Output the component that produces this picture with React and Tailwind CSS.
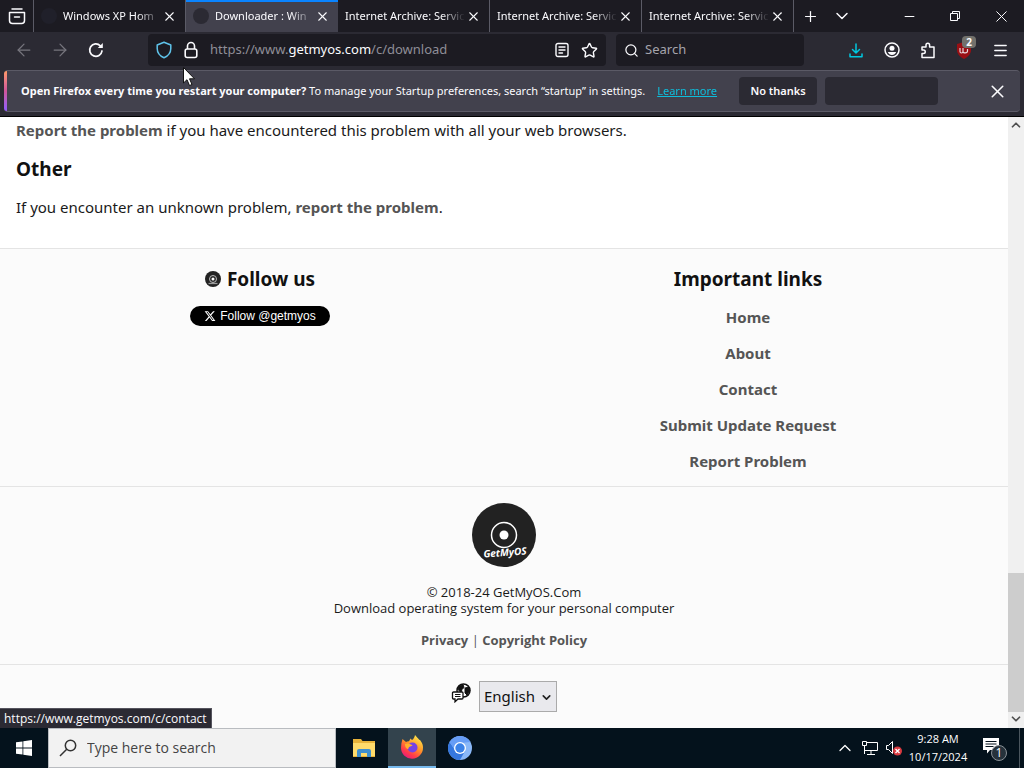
import { useState } from 'react';
import { X, Plus, ChevronDown, ChevronUp, Minus, Search, ArrowLeft, ArrowRight, Star, Menu } from 'lucide-react';

const tabs = [
  { id: 1, title: 'Windows XP Hom', icon: true },
  { id: 2, title: 'Downloader : Win', icon: true },
  { id: 3, title: 'Internet Archive: Servic' },
  { id: 4, title: 'Internet Archive: Servic' },
  { id: 5, title: 'Internet Archive: Servic' },
];

const links = ['Home', 'About', 'Contact', 'Submit Update Request', 'Report Problem'];

const Tab = ({ tab, active, onSelect }) => (
  <div
    className={
      active
        ? 'flex h-8 w-[152px] items-center border-t-2 border-[#0a84ff] bg-[#42414d] pr-2 pb-0.5 pl-[7px]'
        : 'flex h-8 w-[152px] items-center border-r border-[#5b5b66] pr-2 pl-[7px]'
    }
  >
    {tab.icon && <span className={active ? 'mr-1.5 size-4 shrink-0 rounded-full bg-[#2b2a33]' : 'mr-1.5 size-4 shrink-0 rounded-full bg-[#20202a]'} />}
    <button
      type="button"
      onClick={onSelect}
      className="min-w-0 flex-1 text-left text-[11px] whitespace-nowrap [mask-image:linear-gradient(to_left,transparent,black_24px)]"
    >
      {tab.title}
    </button>
    <button type="button" aria-label="Close tab" className="flex size-4 shrink-0 items-center justify-center">
      <X size={15} strokeWidth={1.75} />
    </button>
  </div>
);

const TabBar = () => {
  const [active, setActive] = useState(2);

  return (
    <div className="flex h-8 bg-[#1c1b22]">
      <button type="button" aria-label="Firefox View" className="flex w-[34px] items-center justify-center border-r border-[#5b5b66]">
        <svg width="18" height="18" viewBox="0 0 18 18" fill="none" stroke="currentColor" strokeWidth="1.5" strokeLinecap="round">
          <path d="M4 2h10" />
          <path d="M1.5 5.5h15v8a3 3 0 0 1-3 3h-9a3 3 0 0 1-3-3z" strokeLinejoin="round" />
          <path d="M6.5 10h5" />
        </svg>
      </button>
      {tabs.map((tab) => (
        <Tab key={tab.id} tab={tab} active={tab.id === active} onSelect={() => setActive(tab.id)} />
      ))}
      <button type="button" aria-label="New tab" className="flex w-8 items-center justify-center">
        <Plus size={17} strokeWidth={1.75} />
      </button>
      <button type="button" aria-label="List all tabs" className="flex w-8 items-center justify-center">
        <ChevronDown size={20} strokeWidth={1.75} />
      </button>
      <div className="ml-auto flex">
        <button type="button" aria-label="Minimize" className="flex w-[46px] items-center justify-center">
          <Minus size={15} strokeWidth={1.75} />
        </button>
        <button type="button" aria-label="Restore" className="flex w-[46px] items-center justify-center">
          <svg width="12" height="12" viewBox="0 0 12 12" fill="none" stroke="currentColor">
            <path d="M1.5 3.5h7v7h-7zM3.5 3.5v-2h7v7h-2" />
          </svg>
        </button>
        <button type="button" aria-label="Close" className="flex w-[46px] items-center justify-center">
          <X size={19} strokeWidth={1.25} />
        </button>
      </div>
    </div>
  );
};

const Toolbar = () => (
  <div className="flex h-[38px] items-center bg-[#2b2a33] pr-3 pb-0.5 pl-2">
    <button type="button" aria-label="Back" className="flex size-8 items-center justify-center text-[#77767e]">
      <ArrowLeft size={20} strokeWidth={1.5} />
    </button>
    <button type="button" aria-label="Forward" className="ml-1 flex size-8 items-center justify-center text-[#77767e]">
      <ArrowRight size={20} strokeWidth={1.5} />
    </button>
    <button type="button" aria-label="Reload" className="ml-1 flex size-8 items-center justify-center">
      <svg width="16" height="16" viewBox="0 0 16 16" fill="none" stroke="currentColor" strokeWidth="1.75" strokeLinecap="round">
        <path d="M14 9a6.2 6.2 0 1 1-1.7-5.2" />
        <path d="M14.8 1v5h-5z" fill="currentColor" stroke="none" />
      </svg>
    </button>

    {/* Address bar */}
    <div className="ml-9 flex h-8 flex-1 items-center rounded bg-[#1c1b22] px-2">
      <button type="button" aria-label="Tracking protection" className="text-[#5fc3ea]">
        <svg width="16" height="18" viewBox="0 0 16 18" fill="none" stroke="currentColor" strokeWidth="1.5" strokeLinejoin="round">
          <path d="M8 1.2 14.8 4v3.5c0 4-2.8 7.5-6.8 9.2C4 15 1.2 11.5 1.2 7.500V4z" />
        </svg>
      </button>
      <button type="button" aria-label="Site information" className="ml-3">
        <svg width="14" height="18" viewBox="0 0 14 18" fill="none" stroke="currentColor" strokeWidth="1.6">
          <rect x="1.2" y="8" width="11.6" height="8.5" rx="2" />
          <path d="M3.5 8V5a3.5 3.5 0 0 1 7 0v3" />
        </svg>
      </button>
      <div className="ml-3 flex-1 text-[13px] whitespace-nowrap text-[#8f8e97]">
        https://www.<span className="text-[#fbfbfe]">getmyos.com</span>/c/download
      </div>
      <button type="button" aria-label="Reader view" className="mr-3">
        <svg width="14" height="16" viewBox="0 0 14 16" fill="none" stroke="currentColor" strokeWidth="1.4" strokeLinecap="round">
          <rect x="1" y="1.5" width="12" height="13" rx="2" />
          <path d="M4 5h6M4 8h6M4 11h3.5" />
        </svg>
      </button>
      <button type="button" aria-label="Bookmark this page">
        <Star size={17} strokeWidth={2} />
      </button>
    </div>

    <label className="ml-2.5 flex h-8 w-[188px] items-center rounded bg-[#1c1b22] pl-2">
      <Search size={17} strokeWidth={2} />
      <input type="search" aria-label="Search" placeholder="Search" className="ml-1.5 w-full min-w-0 bg-transparent text-[13px] outline-none placeholder:text-[#a5a4ac]" />
    </label>

    <div className="ml-10 flex items-center">
      <button type="button" aria-label="Downloads" className="flex size-6 items-center justify-center text-[#00c8e0]">
        <svg width="14" height="15" viewBox="0 0 14 15" fill="none" stroke="currentColor" strokeWidth="1.5" strokeLinecap="round" strokeLinejoin="round">
          <path d="M7 1v9M3.5 6.5 7 10l3.5-3.5M1 11v2.800h12V11" />
        </svg>
      </button>
      <button type="button" aria-label="Account" className="ml-3 flex size-6 items-center justify-center">
        <svg width="16" height="16" viewBox="0 0 16 16" fill="none" stroke="currentColor" strokeWidth="1.5">
          <circle cx="8" cy="8" r="7" />
          <circle cx="8" cy="6.2" r="2.5" fill="currentColor" stroke="none" />
          <path d="M3.8 10h8.400c-.8 2-2.300 3-4.200 3s-3.400-1-4.200-3z" fill="currentColor" stroke="none" />
        </svg>
      </button>
      <button type="button" aria-label="Extensions" className="ml-3 flex size-6 items-center justify-center">
        <svg width="16" height="17" viewBox="0 0 16 17" fill="none" stroke="currentColor" strokeWidth="1.5" strokeLinejoin="round">
          <path d="M2 15.500v-4h1.500a1.700 1.700 0 0 0 0-3.500H2V5h4V3a1.800 1.800 0 0 1 3.600 0v2H14v10.500z" />
        </svg>
      </button>
      <button type="button" aria-label="uBlock Origin" className="relative ml-3 flex size-6 items-center justify-center">
        <svg width="16" height="17" viewBox="0 0 16 17" fill="none">
          <path d="M8 0 15 2v6c0 4-3 7-7 9-4-2-7-5-7-9V2z" fill="#990f14" />
          <path d="M4 6v3.500c0 2 3 2 3 0V6M7 9.500c0 2 4.500 2 4.500-.5V7" stroke="#e6d5d9" strokeWidth="1.2" />
        </svg>
        <span className="absolute -top-0.5 left-2.5 h-3 w-3.5 rounded-sm bg-[#72716c] text-center text-[10px] leading-3 font-bold">2</span>
      </button>
      <button type="button" aria-label="Menu" className="ml-3 flex size-6 items-center justify-center">
        <Menu size={17} strokeWidth={2} />
      </button>
    </div>
  </div>
);

const Notification = () => (
  <div className="bg-[#2b2a33] px-1 pb-1">
    <div className="flex h-[42px] items-center rounded border-t border-b border-[#5b5a66] bg-[#42414d] pr-3">
      <span className="h-full w-[3px] shrink-0 rounded-l bg-linear-to-b from-[#ff9a66] via-[#d0549a] to-[#9059ff]" />
      <p className="ml-3.5 text-[11px] whitespace-nowrap">
        <b>Open Firefox every time you restart your computer?</b> To manage your Startup preferences, search “startup” in settings.
        <a href="#startup" className="ml-3 text-[#00ddff] underline opacity-80">Learn more</a>
      </p>
      <button type="button" className="ml-[22px] h-7 w-[78px] shrink-0 rounded bg-[#2b2a33] text-[11px] font-semibold">No thanks</button>
      <button type="button" aria-label="Open on startup" className="ml-2 h-7 w-[113px] shrink-0 rounded bg-[#2b2a33]" />
      <button type="button" aria-label="Dismiss" className="ml-auto">
        <X size={21} strokeWidth={1.75} />
      </button>
    </div>
  </div>
);

const Page = () => {
  const [language, setLanguage] = useState('English');

  return (
    <main className="flex min-w-0 flex-1 flex-col overflow-hidden bg-[#fbfbfb] font-['Noto_Sans',sans-serif] text-[15px] text-[#1a1a1a]">
      <section className="border-b border-[#e4e4e4] bg-white px-4 pb-7">
        <p className="leading-[26px]">
          <a href="#report" className="font-bold text-[#555]">Report the problem</a> if you have encountered this problem with all your web browsers.
        </p>
        <h2 className="mt-3 text-[19px] leading-7 font-bold text-[#111]">Other</h2>
        <p className="mt-[11px] leading-[26px]">
          If you encounter an unknown problem, <a href="#report" className="font-bold text-[#555]">report the problem</a>.
        </p>
      </section>

      <section className="grid grid-cols-2 border-b border-[#e4e4e4] px-4 pt-4 pb-[5px] text-center">
        <div>
          <h2 className="flex items-center justify-center gap-1.5 text-[19px] leading-7 font-bold text-[#111]">
            <svg width="16" height="16" viewBox="0 0 64 64">
              <circle cx="32" cy="32" r="32" fill="#222" />
              <circle cx="32" cy="32" r="14" fill="none" stroke="#bbb" strokeWidth="4" />
              <circle cx="32" cy="32" r="6" fill="#fff" />
              <path d="M14 50h36" stroke="#999" strokeWidth="5" />
            </svg>
            Follow us
          </h2>
          <a href="#follow" className="mt-[13px] inline-flex h-5 items-center gap-1 rounded-full bg-black px-3.5 font-['Liberation_Sans',sans-serif] text-xs text-white">
            <svg width="12" height="12" viewBox="0 0 24 24" fill="currentColor">
              <path d="M18.244 2.250h3.308l-7.227 8.260 8.502 11.240H16.170l-5.214-6.817L4.990 21.750H1.680l7.730-8.835L1.254 2.250H8.080l4.713 6.231zm-1.161 17.520h1.833L7.084 4.126H5.117z" />
            </svg>
            Follow @getmyos
          </a>
        </div>
        <div>
          <h2 className="text-[19px] leading-7 font-bold text-[#111]">Important links</h2>
          <ul className="mt-2">
            {links.map((link) => (
              <li key={link} className="h-9 leading-8 font-bold text-[#555]">
                <a href="#link">{link}</a>
              </li>
            ))}
          </ul>
        </div>
      </section>

      <section className="flex flex-col items-center border-b border-[#e4e4e4] py-4 font-['Open_Sans',sans-serif] text-[13px] leading-4">
        <svg width="64" height="64" viewBox="0 0 64 64">
          <circle cx="32" cy="32" r="32" fill="#222" />
          <circle cx="32" cy="32" r="12.5" fill="none" stroke="#fff" strokeWidth="1.5" />
          <circle cx="32" cy="32" r="4.5" fill="#fff" />
          <text x="33" y="53" fill="#fff" fontSize="10" fontWeight="700" fontStyle="italic" textAnchor="middle" fontFamily="Noto Sans" transform="rotate(-4 33 50)">GetMyOS</text>
        </svg>
        <p className="mt-[17px]">© 2018-24 GetMyOS.Com</p>
        <p>Download operating system for your personal computer</p>
        <p className="mt-4 text-[#555]">
          <a href="#privacy" className="font-bold">Privacy</a> | <a href="#copyright" className="font-bold">Copyright Policy</a>
        </p>
      </section>

      <section className="flex flex-1 items-start justify-center gap-2 pt-4">
        <svg width="20" height="20" viewBox="0 0 20 20" className="mt-0.5" fill="none" stroke="#111">
          <circle cx="12.5" cy="7.5" r="6.5" fill="#fff" strokeWidth="1.5" />
          <path d="M8 3.500 12 1.500l1 3-2 2-1 3-3-3zM14 5l4-1 .8 4-2.800 4-2-2z" fill="#111" />
          <path d="M2.500 9h8.500a1 1 0 0 1 1 1v5a1 1 0 0 1-1 1H7l-3 2.800V16H2.500a1 1 0 0 1-1-1v-5a1 1 0 0 1 1-1z" fill="#fff" strokeWidth="1.3" />
          <path d="M4 11.500h5.500M4 13.500h5.500" />
        </svg>
        <div className="relative">
          <select
            aria-label="Language"
            value={language}
            onChange={(e) => setLanguage(e.target.value)}
            className="h-[31px] w-[78px] appearance-none border border-[#aaa] bg-[#e9e9ed] pl-1 text-[15px] text-[#111]"
          >
            <option>English</option>
          </select>
          <ChevronDown size={13} strokeWidth={3} className="pointer-events-none absolute top-2.5 right-1" color="#222" />
        </div>
      </section>
    </main>
  );
};

const Scrollbar = () => (
  <div className="flex w-4 flex-col items-center justify-between bg-[#f0f0f0] text-[#505050]">
    <ChevronUp size={14} strokeWidth={3} className="mt-px" />
    <div className="flex w-full flex-col items-center">
      <span className="h-[139px] w-full bg-[#cdcdcd]" />
      <ChevronDown size={14} strokeWidth={3} className="mb-0.5" />
    </div>
  </div>
);

const Taskbar = () => (
  <footer className="flex h-10 bg-[#04121c] font-['Open_Sans',sans-serif] text-white">
    <button type="button" aria-label="Start" className="flex w-12 items-center justify-center">
      <svg width="16" height="16" viewBox="0 0 16 16" fill="currentColor">
        <path d="M0 2.300 6.500 1.400v6.200H0zM7.300 1.300 16 0v7.600H7.300zM0 8.400h6.500v6.200L0 13.700zM7.300 8.400H16V16l-8.700-1.300z" />
      </svg>
    </button>
    <label className="flex w-72 items-center border border-[#b9bcc0] bg-[#f2f2f2] pl-2.5 text-[#333]">
      <svg width="18" height="18" viewBox="0 0 18 18" className="shrink-0" fill="none" stroke="currentColor" strokeWidth="1.5">
        <circle cx="11.5" cy="6.5" r="5.2" />
        <path d="M7.700 10.300 1 17" />
      </svg>
      <input type="search" aria-label="Search Windows" placeholder="Type here to search" className="ml-2.5 w-full min-w-0 bg-transparent text-sm outline-none placeholder:text-[#444]" />
    </label>
    <button type="button" aria-label="File Explorer" className="ml-1 flex w-12 items-center justify-center">
      <svg width="22" height="20" viewBox="0 0 22 20">
        <path d="M0 1h8l1.500 2H22v16H0z" fill="#e8b33a" />
        <path d="M0 5h22v13H0z" fill="#ffdb6b" />
        <path d="M4 19v-6a2 2 0 0 1 2-2h10a2 2 0 0 1 2 2v6h-4v-4H8v4z" fill="#3f8fce" />
      </svg>
    </button>
    <button type="button" aria-label="Firefox" className="flex w-12 items-center justify-center border-b-2 border-[#76b9ed] bg-[#33434d]">
      <svg width="24" height="24" viewBox="0 0 24 24">
        <defs>
          <linearGradient id="fox" x1="0.8" y1="0" x2="0.2" y2="1">
            <stop offset="0" stopColor="#fff04f" />
            <stop offset="0.45" stopColor="#ff9228" />
            <stop offset="0.75" stopColor="#ff3b4a" />
            <stop offset="1" stopColor="#e31587" />
          </linearGradient>
        </defs>
        <path d="M2.500 4 6 7c.8-.5 2-.8 3-.7l1.500-2.800L12 5c1.500-1 2.500-2.500 3-5 1.500 2 3 3 4 4.500 1 .5 1.500 1 2 2 1.500 2 2 4.200 2 6A11 11 0 0 1 1 13c0-3 .5-6 1.500-9z" fill="url(#fox)" />
        <circle cx="12.5" cy="12.5" r="5" fill="#7542e5" />
        <path d="M5 9c2-1 4-.5 6 .5 1.500.5 2 1 .5 1.500-2 .5-3 1-3.200 3C6 14 5 11.500 5 9z" fill="#ffb02e" />
      </svg>
    </button>
    <button type="button" aria-label="Chromium" className="flex w-12 items-center justify-center">
      <svg width="24" height="24" viewBox="0 0 24 24">
        <circle cx="12" cy="12" r="12" fill="#8ab8f8" />
        <path d="M1.600 6A12 12 0 0 0 12 24l5-9-10-1z" fill="#3577de" />
        <path d="M1.600 6A12 12 0 0 1 22.400 6L12 7 7 14z" fill="#669df6" />
        <circle cx="12" cy="12" r="6" fill="#fff" />
        <circle cx="12" cy="12" r="4.7" fill="#3b82e8" />
      </svg>
    </button>

    <div className="ml-auto flex items-center">
      <button type="button" aria-label="Show hidden icons">
        <ChevronUp size={20} strokeWidth={1.5} />
      </button>
      <svg width="18" height="16" viewBox="0 0 18 16" className="ml-1.5" fill="none" stroke="currentColor">
        <path d="M6 2.500h10.500v8H3.500V7M10 10.500V14M6 14.500h8" />
        <path d="M1.500 1.500h4v4h-4zM3.500 5.500V14" />
      </svg>
      <svg width="18" height="16" viewBox="0 0 18 16" className="ml-1.5" fill="none" stroke="currentColor">
        <path d="M1.500 5.500h2l4-4v12l-4-4h-2z" />
        <circle cx="12.5" cy="11" r="4.5" fill="#d93a40" stroke="none" />
        <path d="m10.500 9 4 4m0-4-4 4" strokeWidth="1.3" />
      </svg>
      <div className="ml-1 w-[62px] text-center text-[11px] leading-[18px] whitespace-nowrap">
        <div>9:28 AM</div>
        <div>10/17/2024</div>
      </div>
      <button type="button" aria-label="Notifications" className="ml-3.5 w-8">
        <svg width="25" height="25" viewBox="0 0 25 25">
          <path d="M0 2h16v12H7l-3 3.500V14H0z" fill="#fff" />
          <path d="M2.500 5.500h11M2.500 8h11M2.500 10.500h8" stroke="#04121c" />
          <circle cx="16" cy="17" r="7.5" fill="#26323b" stroke="#8a9197" />
          <text x="16" y="21" fill="#fff" fontSize="12" textAnchor="middle">1</text>
        </svg>
      </button>
      <span className="mr-1 ml-1 h-10 w-px bg-[#4b565e]" />
    </div>
  </footer>
);

const App = () => (
  <div className="relative flex h-screen flex-col overflow-hidden bg-[#1c1b22] font-['Noto_Sans',sans-serif] text-[#fbfbfe]">
    <header className="border-b border-black">
      <TabBar />
      <Toolbar />
      <Notification />
    </header>

    <div className="relative flex min-h-0 flex-1">
      <Page />
      <Scrollbar />
      {/* Link status */}
      <div className="absolute bottom-0 left-0 h-5 border-t border-r border-[#55545e] bg-[#2b2a33] px-1 font-['Open_Sans',sans-serif] text-xs leading-5 whitespace-nowrap">
        https://www.getmyos.com/c/contact
      </div>
    </div>

    <Taskbar />

    {/* Mouse pointer */}
    <svg width="13" height="20" viewBox="0 0 13 20" className="pointer-events-none absolute top-[67px] left-[183px]">
      <path d="M.5.500v15.500l3.500-3.300 2.500 5.800 2.500-1-2.500-5.700h5z" fill="#fff" stroke="#111" />
    </svg>
  </div>
);

export default App;
